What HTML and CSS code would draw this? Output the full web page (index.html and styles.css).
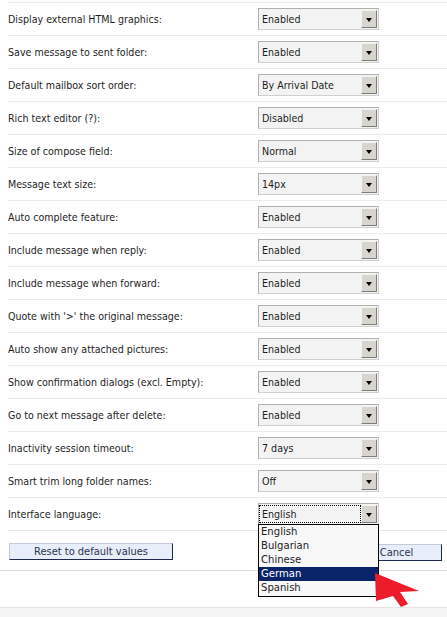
FILE: index.html
```html
<!DOCTYPE html>
<html>
<head>
<meta charset="utf-8">
<link rel="stylesheet" href="styles.css">
</head>
<body>
<div class="page">
  <div class="rows">
    <div class="row"><span class="label">Display external HTML graphics:</span><div class="select"><span class="val">Enabled</span><span class="btn"></span></div></div>
    <div class="row"><span class="label">Save message to sent folder:</span><div class="select"><span class="val">Enabled</span><span class="btn"></span></div></div>
    <div class="row"><span class="label">Default mailbox sort order:</span><div class="select"><span class="val">By Arrival Date</span><span class="btn"></span></div></div>
    <div class="row"><span class="label">Rich text editor (<a class="help">?</a>):</span><div class="select"><span class="val">Disabled</span><span class="btn"></span></div></div>
    <div class="row"><span class="label">Size of compose field:</span><div class="select"><span class="val">Normal</span><span class="btn"></span></div></div>
    <div class="row"><span class="label">Message text size:</span><div class="select"><span class="val">14px</span><span class="btn"></span></div></div>
    <div class="row"><span class="label">Auto complete feature:</span><div class="select"><span class="val">Enabled</span><span class="btn"></span></div></div>
    <div class="row"><span class="label">Include message when reply:</span><div class="select"><span class="val">Enabled</span><span class="btn"></span></div></div>
    <div class="row"><span class="label">Include message when forward:</span><div class="select"><span class="val">Enabled</span><span class="btn"></span></div></div>
    <div class="row"><span class="label">Quote with '&gt;' the original message:</span><div class="select"><span class="val">Enabled</span><span class="btn"></span></div></div>
    <div class="row"><span class="label">Auto show any attached pictures:</span><div class="select"><span class="val">Enabled</span><span class="btn"></span></div></div>
    <div class="row"><span class="label">Show confirmation dialogs (excl. Empty):</span><div class="select"><span class="val">Enabled</span><span class="btn"></span></div></div>
    <div class="row"><span class="label">Go to next message after delete:</span><div class="select"><span class="val">Enabled</span><span class="btn"></span></div></div>
    <div class="row"><span class="label">Inactivity session timeout:</span><div class="select"><span class="val">7 days</span><span class="btn"></span></div></div>
    <div class="row"><span class="label">Smart trim long folder names:</span><div class="select"><span class="val">Off</span><span class="btn"></span></div></div>
    <div class="row"><span class="label">Interface language:</span>
      <div class="select open"><span class="val focus">English</span><span class="btn"></span>
        <ul class="list">
          <li>English</li>
          <li>Bulgarian</li>
          <li>Chinese</li>
          <li class="sel">German</li>
          <li>Spanish</li>
        </ul>
      </div>
    </div>
  </div>
  <div class="actions">
    <button class="button reset">Reset to default values</button>
    <button class="button cancel">Cancel</button>
  </div>
  <div class="blank"></div>
  <div class="footer"></div>
  <svg class="pointer" width="50" height="40" viewBox="0 0 50 40"><polygon points="0,1 44,19 25,20 33,32 26,35 18,24 1,29" fill="#ec1c2a"/></svg>
</div>
</body>
</html>
```
FILE: styles.css
```css
html, body {
  margin: 0;
  padding: 0;
  background: #ffffff;
}
body {
  font-family: "DejaVu Sans Condensed", "Liberation Sans", sans-serif;
  font-size: 10.6px;
  color: #1e1e1e;
}
.page {
  position: relative;
  width: 447px;
  height: 617px;
  overflow: hidden;
  padding-top: 2px;
  box-sizing: border-box;
}
.rows {
  margin-left: 8px;
  border-bottom: 1px solid #e6e6e6;
}
.row {
  display: flex;
  align-items: center;
  height: 32px;
  border-top: 1px solid #ebebeb;
}
.label {
  flex: none;
  width: 250px;
}
.help {
  color: #1e1e1e;
}
.select {
  position: relative;
  box-sizing: border-box;
  width: 121px;
  height: 22px;
  border: 1px solid #b0b0b0;
  border-right-color: #cfcfcf;
  border-bottom-color: #cfcfcf;
  background: #f3f3f3;
  display: flex;
  align-items: center;
}
.val {
  flex: 1;
  padding-left: 3px;
  line-height: 14px;
}
.btn {
  position: absolute;
  right: 1px;
  top: 1px;
  bottom: 1px;
  width: 16px;
  box-sizing: border-box;
  background: #d8d5cf;
  border: 1px solid;
  border-color: #f4f3f0 #7c7c7c #7c7c7c #f4f3f0;
}
.btn::after {
  content: "";
  position: absolute;
  left: 3.5px;
  top: 7px;
  border-left: 3.5px solid transparent;
  border-right: 3.5px solid transparent;
  border-top: 4px solid #000;
}
.open .val.focus {
  margin: 0 18px 0 1px;
  padding-left: 2px;
  outline: 1px dotted #000;
  line-height: 16px;
}
.list {
  position: absolute;
  left: -1px;
  top: 20px;
  width: 121px;
  box-sizing: border-box;
  margin: 0;
  padding: 0 0 1px;
  list-style: none;
  background: #f8f8f8;
  border: 1px solid #000;
  z-index: 2;
  font-size: 11.2px;
}
.list li {
  height: 14px;
  line-height: 14px;
  padding-left: 2px;
}
.list li.sel {
  background: #0a246a;
  color: #ffffff;
}
.actions {
  display: flex;
  justify-content: space-between;
  align-items: flex-start;
  height: 40px;
  padding: 12px 5px 0 9px;
  box-sizing: border-box;
  border-bottom: 1px solid #dcdcdc;
}
.button {
  font-family: inherit;
  font-size: 11px;
  color: #2b3550;
  background: #e7edf9;
  border: 1px solid;
  border-color: #c3cbd9 #1d2a4d #1d2a4d #c3cbd9;
  height: 17px;
  padding: 0;
  line-height: 14px;
}
.reset {
  width: 164px;
}
.cancel {
  width: 91px;
  margin-top: 1px;
}
.blank {
  height: 36px;
  border-bottom: 1px solid #e2e2e2;
}
.footer {
  height: 12px;
  background: #f5f5f5;
}
.pointer {
  position: absolute;
  left: 375px;
  top: 572px;
  z-index: 3;
}
```
